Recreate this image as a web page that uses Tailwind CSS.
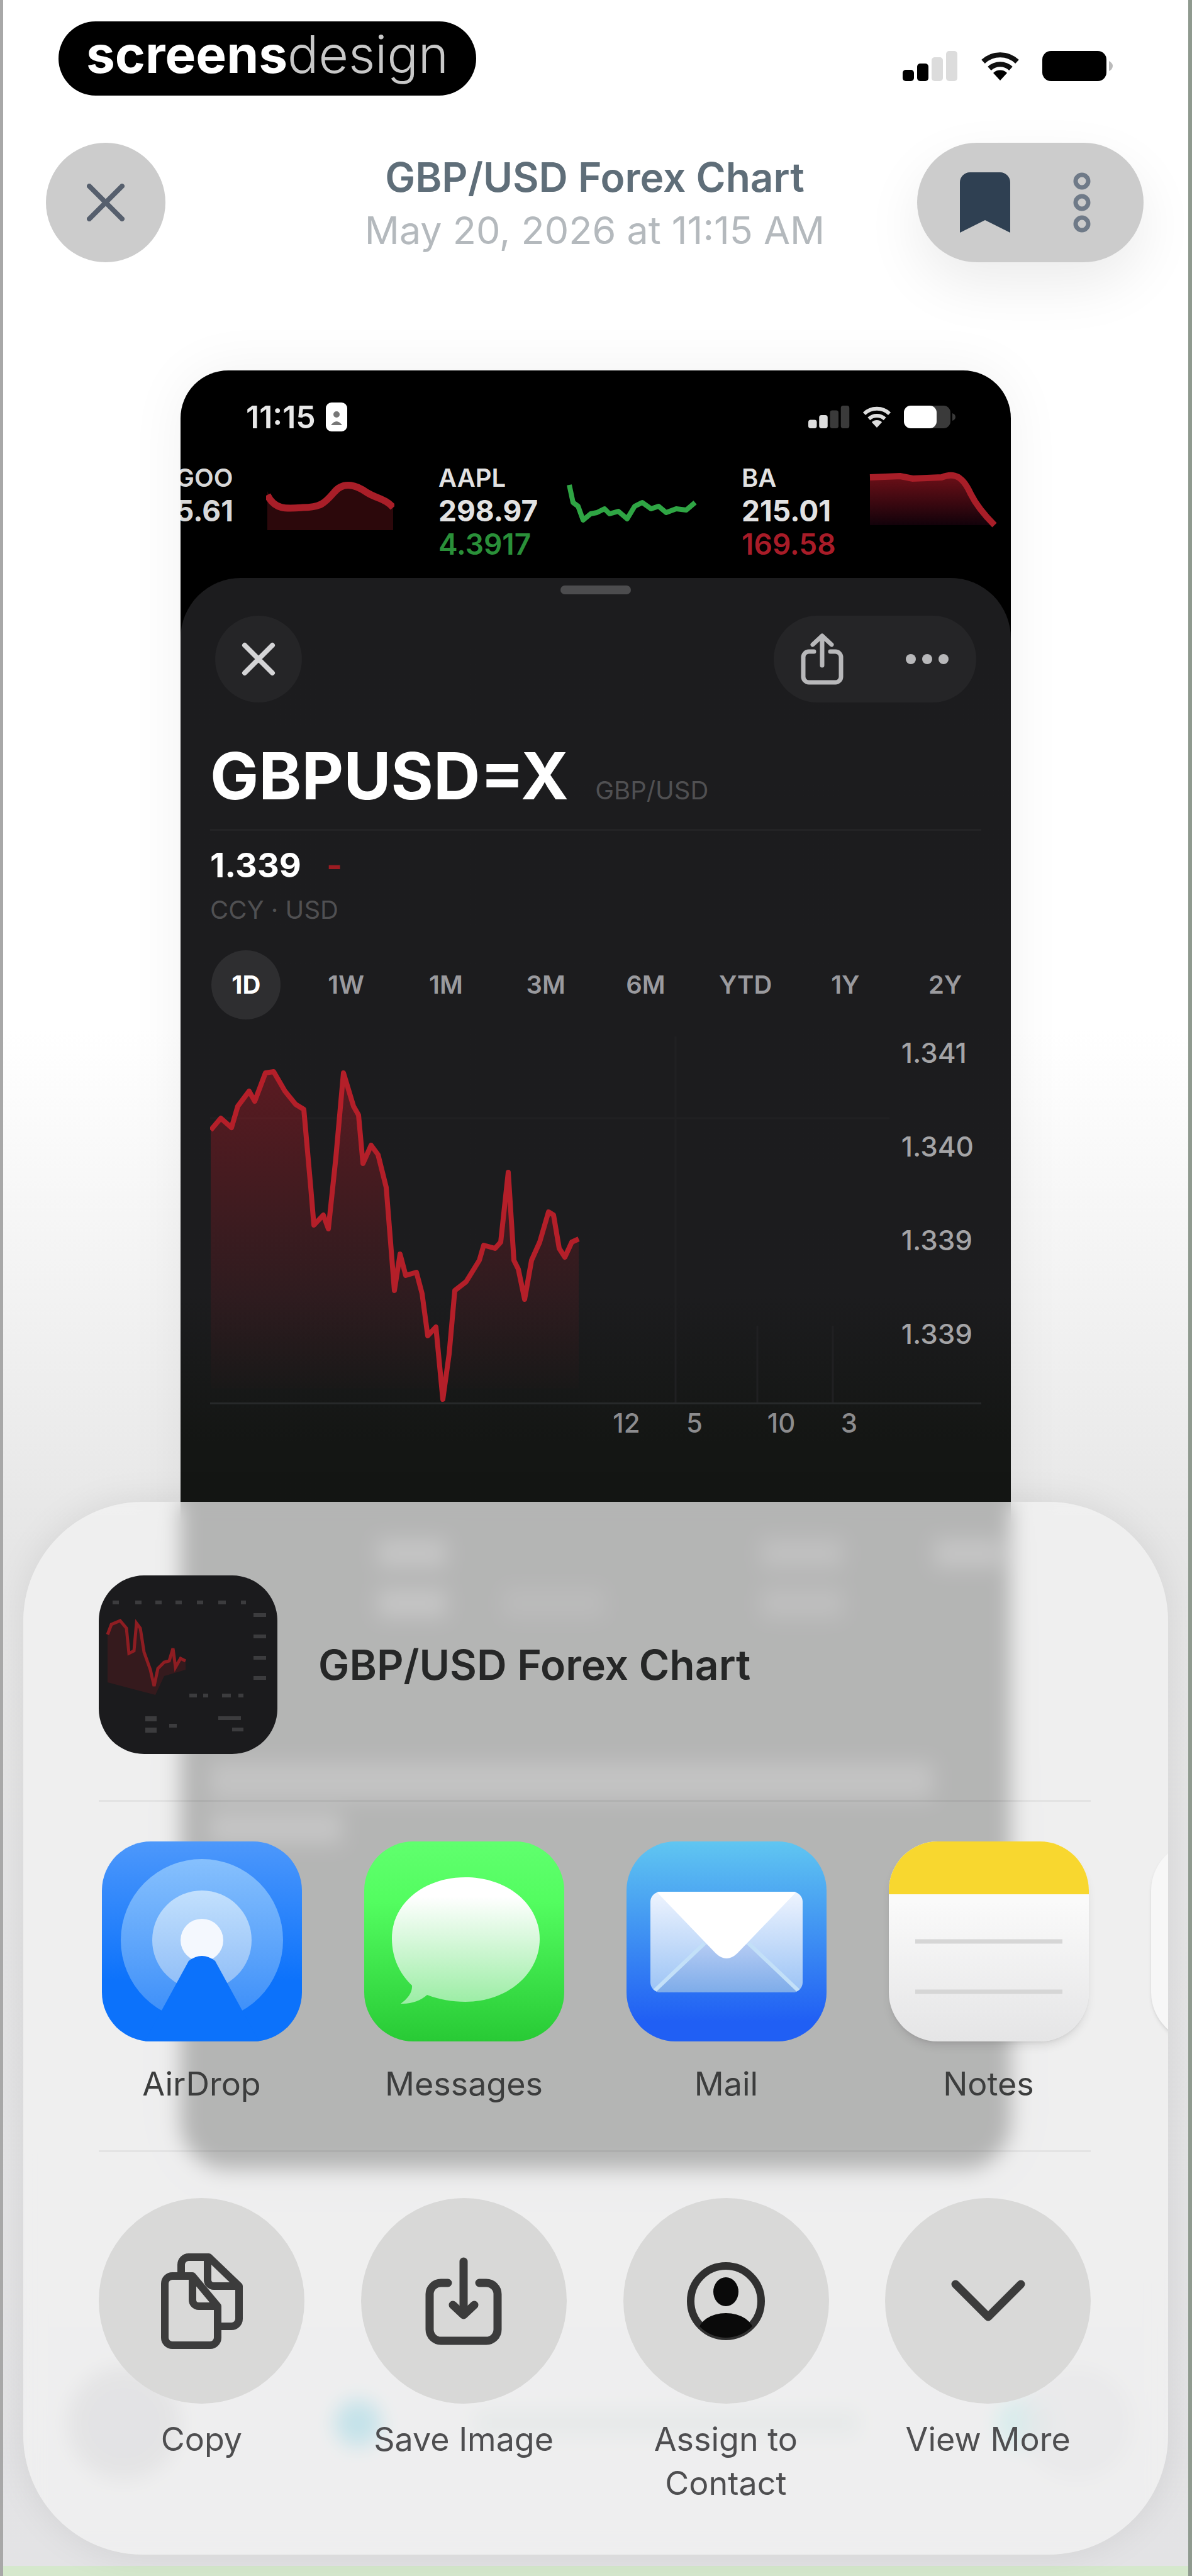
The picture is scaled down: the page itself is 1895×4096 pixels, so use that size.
<!DOCTYPE html>
<html lang="en">

<head>
    <meta charset="UTF-8" />
    <meta name="viewport" content="width=device-width, initial-scale=1.0" />
    <title>GBP/USD Forex Chart</title>
    <script src="https://cdn.jsdelivr.net/npm/@tailwindcss/browser@4"></script>
</head>

<body class="font-[Inter,'Liberation_Sans',sans-serif]">
    <div class="relative min-h-screen overflow-hidden border-l-5 border-r-6 border-l-[#a8a8a8] border-r-[#8f9a8f] bg-linear-to-b from-white from-40% via-[#e6e6e6] via-60% to-[#e3e3e5]">

        <!-- status bar -->
        <div class="flex items-center justify-between pt-[34px] pl-[88px] pr-[120px]">
            <div class="flex h-[118px] w-[664px] items-center justify-center rounded-full bg-black pb-3 text-[82px] leading-none text-white">
                <span class="font-bold">screens</span><span class="font-light text-[#c8c8c8]">design</span>
            </div>
            <div class="flex items-center gap-9 pt-6">
                <svg class="h-[48px] w-[88px]" viewBox="0 0 88 48">
                    <rect x="0" y="30" width="18" height="18" rx="5" />
                    <rect x="23" y="20" width="18" height="28" rx="5" />
                    <rect x="46" y="10" width="18" height="38" rx="5" fill="#dcdcdc" />
                    <rect x="69" y="0" width="18" height="48" rx="5" fill="#dcdcdc" />
                </svg>
                <svg class="h-[48px] w-[62px]" viewBox="0 0 62 46">
                    <path d="M31 46 20 34a16 16 0 0 1 22 0z" />
                    <path d="M14 27a25 25 0 0 1 34 0M4 16a39 39 0 0 1 54 0" fill="none" stroke="#111" stroke-width="8" />
                </svg>
                <svg class="h-[48px] w-[112px]" viewBox="0 0 112 48">
                    <rect x="0" y="0" width="102" height="48" rx="14" />
                    <path d="M106 16q6 3 6 8t-6 8z" fill="#bbb" />
                </svg>
            </div>
        </div>

        <!-- header -->
        <header class="mt-[75px] flex items-center justify-between pl-[68px] pr-[71px]">
            <div class="w-[360px]">
                <button aria-label="Close" class="flex size-[190px] items-center justify-center rounded-full bg-[#cccccc]">
                    <svg class="size-[60px]" viewBox="0 0 60 60" fill="none" stroke="#565f6d" stroke-width="8" stroke-linecap="round">
                        <path d="M4 4 56 56M56 4 4 56" />
                    </svg>
                </button>
            </div>
            <div class="pt-1 text-center whitespace-nowrap">
                <h1 class="text-[64px] leading-[84px] font-semibold text-[#5f6e79]">GBP/USD Forex Chart</h1>
                <p class="text-[61px] leading-[84px] text-[#b4b9bd]">May 20, 2026 at 11:15 AM</p>
            </div>
            <div class="flex h-[190px] w-[360px] items-center justify-center gap-[84px] rounded-full bg-[#cccccc] shadow-[0_36px_90px_rgba(0,0,0,0.08)]">
                <button aria-label="Bookmark">
                    <svg class="h-[96px] w-[80px]" viewBox="0 0 80 96">
                        <path d="M16 0h48a16 16 0 0 1 16 16v80L40 76 0 96V16A16 16 0 0 1 16 0z" fill="#2f4052" />
                    </svg>
                </button>
                <button aria-label="More">
                    <svg class="h-[96px] w-[60px]" viewBox="0 0 60 96" fill="none" stroke="#6f7a88" stroke-width="7">
                        <circle cx="30" cy="14" r="10" />
                        <circle cx="30" cy="48" r="10" />
                        <circle cx="30" cy="82" r="10" />
                    </svg>
                </button>
            </div>
        </header>

        <!-- chart screenshot -->
        <main class="mx-auto mt-[172px] h-[2860px] w-[1320px] overflow-hidden rounded-[76px] bg-black text-white shadow-[0_0_90px_rgba(0,0,0,0.06)]">
            <div class="flex items-center justify-between pt-[44px] pr-[88px] pl-[104px]">
                <div class="flex items-center gap-4">
                    <span class="text-[50px] leading-[60px] font-semibold text-[#e8e8e8]">11:15</span>
                    <svg class="h-[46px] w-[34px]" viewBox="0 0 34 46">
                        <rect width="34" height="46" rx="9" fill="#fff" />
                        <circle cx="17" cy="19" r="5" fill="#777" />
                        <path d="M8 36q9-12 18 0z" fill="#777" />
                    </svg>
                </div>
                <div class="flex items-center gap-5">
                    <svg class="h-[36px] w-[66px]" viewBox="0 0 88 48" fill="#ddd">
                        <rect x="0" y="30" width="18" height="18" rx="5" />
                        <rect x="23" y="20" width="18" height="28" rx="5" />
                        <rect x="46" y="10" width="18" height="38" rx="5" fill="#3a3a3a" />
                        <rect x="69" y="0" width="18" height="48" rx="5" fill="#3a3a3a" />
                    </svg>
                    <svg class="h-[36px] w-[46px]" viewBox="0 0 62 46" fill="#ddd">
                        <path d="M31 46 20 34a16 16 0 0 1 22 0z" />
                        <path d="M14 27a25 25 0 0 1 34 0M4 16a39 39 0 0 1 54 0" fill="none" stroke="#ddd" stroke-width="8" />
                    </svg>
                    <svg class="h-[36px] w-[82px]" viewBox="0 0 82 36">
                        <rect width="74" height="36" rx="11" fill="#3a3a3a" />
                        <rect width="52" height="36" rx="11" fill="#fff" />
                        <path d="M77 12q5 2 5 6t-5 6z" fill="#3a3a3a" />
                    </svg>
                </div>
            </div>

            <!-- tickers -->
            <div class="mt-[40px] flex h-[186px] text-[46px] leading-[53px] font-bold">
                <div class="flex w-[410px] gap-[36px]">
                    <div class="-ml-2 w-[108px] text-[#d8d8d8]">
                        <div class="text-[40px] font-semibold">GOO</div>
                        <div>5.61</div>
                    </div>
                    <svg class="mt-[18px] h-[110px] w-[204px]" viewBox="0 0 204 110">
                        <path d="M2 30 C14 58 32 56 58 54 C88 54 94 48 108 32 C124 12 146 22 160 32 C176 42 190 42 202 56 V92 H2Z" fill="#2c080b" />
                        <path d="M2 36 C14 60 32 58 58 56 C88 56 94 48 108 32 C124 12 146 22 160 32 C176 42 190 42 202 56" fill="none" stroke="#a81e28" stroke-width="11" />
                    </svg>
                </div>
                <div class="flex w-[482px] gap-[36px]">
                    <div class="w-[164px] text-[#e2e2e2]">
                        <div class="text-[40px] font-semibold">AAPL</div>
                        <div>298.97</div>
                        <div class="font-semibold text-[#2a9039]">4.3917</div>
                    </div>
                    <svg class="mt-[18px] h-[110px] w-[212px]" viewBox="0 0 212 110" fill="none" stroke="#2fa544" stroke-width="8" stroke-linejoin="round">
                        <path d="M8 20 L14 48 L22 54 L30 76 L42 66 L52 64 L64 58 L72 66 L86 62 L100 74 L112 54 L124 48 L138 58 L150 54 L162 64 L178 58 L194 60 L208 48" />
                    </svg>
                </div>
                <div class="flex gap-[38px]">
                    <div class="w-[164px] text-[#e2e2e2]">
                        <div class="text-[40px] font-semibold">BA</div>
                        <div>215.01</div>
                        <div class="font-semibold text-[#a81c28]">169.58</div>
                    </div>
                    <svg class="mt-[6px] h-[110px] w-[204px]" viewBox="0 0 204 110">
                        <defs>
                            <linearGradient id="fall" x1="0" y1="0" x2="0" y2="1">
                                <stop offset="0" stop-color="#6a0f17" />
                                <stop offset="1" stop-color="#12020a" />
                            </linearGradient>
                        </defs>
                        <path d="M2 22 L118 22 C140 14 150 24 160 44 C172 66 184 80 200 96 H2Z" fill="url(#fall)" />
                        <path d="M2 20 L50 18 L70 22 L116 20 C140 10 152 24 162 46 C172 66 184 80 200 96" fill="none" stroke="#a81e28" stroke-width="10" />
                    </svg>
                </div>
            </div>

            <!-- detail sheet -->
            <section class="h-full rounded-t-[96px] bg-linear-to-b from-[#1c1c1e] from-40% to-[#141614] to-48% px-[47px] pt-[12px]">
                <div class="mx-auto h-[14px] w-[112px] rounded-full bg-[#4c4c4e]"></div>
                <div class="mt-[34px] flex justify-between px-[8px]">
                    <button aria-label="Close" class="flex size-[138px] items-center justify-center rounded-full bg-[#252527]">
                        <svg class="size-[54px]" viewBox="0 0 54 54" fill="none" stroke="#d4d4d6" stroke-width="8" stroke-linecap="round">
                            <path d="M5 5 49 49M49 5 5 49" />
                        </svg>
                    </button>
                    <div class="flex h-[138px] w-[322px] items-center justify-between rounded-full bg-[#252527] px-[42px]">
                        <button aria-label="Share">
                            <svg class="h-[84px] w-[70px]" viewBox="0 0 70 84" fill="none" stroke="#b8b8ba" stroke-width="7" stroke-linecap="round" stroke-linejoin="round">
                                <path d="M22 30h-8a9 9 0 0 0-9 9v31a9 9 0 0 0 9 9h42a9 9 0 0 0 9-9V39a9 9 0 0 0-9-9h-8M35 52V5M20 19 35 5l15 14" />
                            </svg>
                        </button>
                        <button aria-label="More">
                            <svg class="h-[20px] w-[72px]" viewBox="0 0 72 20" fill="#b8b8ba">
                                <circle cx="10" cy="10" r="8" />
                                <circle cx="36" cy="10" r="8" />
                                <circle cx="62" cy="10" r="8" />
                            </svg>
                        </button>
                    </div>
                </div>

                <div class="mt-[52px] flex items-baseline gap-[42px] border-b-3 border-[#232325] pb-[19px]">
                    <h2 class="text-[103px] leading-[130px] font-bold">GBPUSD=X</h2>
                    <span class="text-[40px] text-[#505052]">GBP/USD</span>
                </div>
                <div class="mt-[22px] flex items-center gap-[40px] text-[54px] leading-[66px] font-bold">
                    <span>1.339</span>
                    <span class="text-[#9c1c22]">-</span>
                </div>
                <p class="mt-[12px] text-[40px] leading-[52px] text-[#505052]">CCY · USD</p>

                <div class="-mx-[22px] mt-[38px] grid grid-cols-8 text-[40px] font-semibold text-[#9a9a9e]">
                    <button class="mx-auto size-[110px] rounded-full bg-[#2e2e30] font-bold text-white">1D</button>
                    <button>1W</button>
                    <button>1M</button>
                    <button>3M</button>
                    <button>6M</button>
                    <button>YTD</button>
                    <button>1Y</button>
                    <button>2Y</button>
                </div>

                <!-- chart -->
                <div class="mt-[27px] flex justify-between border-b-3 border-[#27292a]">
                    <svg class="h-[582px] w-[1080px]" viewBox="0 0 1080 582">
                        <defs>
                            <linearGradient id="area" x1="0" y1="0" x2="0" y2="1">
                                <stop offset="0" stop-color="#b01825" stop-opacity=".42" />
                                <stop offset=".5" stop-color="#b01825" stop-opacity=".2" />
                                <stop offset="1" stop-color="#b01825" stop-opacity="0" />
                            </linearGradient>
                        </defs>
                        <path d="M0 130H1080M740 0V582M870 460V582M990 460V582" stroke="#202022" stroke-width="3" />
                        <path fill="url(#area)" d="M1 149 17 130 34 145 44 111 62 87 71 103 88 58 101 56 119 87 136 108 149 116 160 240 165 300 180 284 188 306 200 192 212 58 228 111 236 125 243 202 256 173 267 188 280 240 293 404 302 346 311 380 328 375 337 409 346 476 359 462 370 577 380 505 389 404 407 390 428 356 435 332 453 337 462 327 474 216 483 356 490 370 500 418 511 356 524 327 538 279 546 284 555 337 564 351 575 327 586 322V560H1Z" />
                        <path fill="none" stroke="#b41f29" stroke-width="8" stroke-linejoin="round" d="M1 149 17 130 34 145 44 111 62 87 71 103 88 58 101 56 119 87 136 108 149 116 160 240 165 300 180 284 188 306 200 192 212 58 228 111 236 125 243 202 256 173 267 188 280 240 293 404 302 346 311 380 328 375 337 409 346 476 359 462 370 577 380 505 389 404 407 390 428 356 435 332 453 337 462 327 474 216 483 356 490 370 500 418 511 356 524 327 538 279 546 284 555 337 564 351 575 327 586 322" />
                    </svg>
                    <div class="flex flex-col gap-[101px] pt-[2px] pr-[12px] text-[44px] leading-[48px] font-medium text-[#a4a4a6]">
                        <span>1.341</span>
                        <span>1.340</span>
                        <span>1.339</span>
                        <span>1.339</span>
                    </div>
                </div>
                <div class="mt-[6px] flex pl-[600px] text-center text-[42px] leading-[48px] font-medium text-[#8c8c8e]">
                    <span class="w-[124px]">12</span>
                    <span class="w-[92px]">5</span>
                    <span class="w-[184px]">10</span>
                    <span class="w-[32px]">3</span>
                </div>

                <!-- stats behind the share sheet -->
                <div aria-hidden="true" class="mt-[160px] space-y-[33px] pl-[266px]">
                    <div class="flex *:h-[46px] *:shrink-0">
                        <div class="mr-[500px] w-[110px] bg-[#505050]"></div>
                        <div class="mr-[145px] w-[130px] bg-[#404040]"></div>
                        <div class="w-[110px] bg-[#505050]"></div>
                    </div>
                    <div class="flex *:h-[46px] *:shrink-0">
                        <div class="mr-[90px] w-[110px] bg-[#505050]"></div>
                        <div class="mr-[250px] w-[160px] bg-[#2e2e2e]"></div>
                        <div class="w-[130px] bg-[#3a3a3a]"></div>
                    </div>
                </div>
                <div aria-hidden="true" class="mt-[230px] space-y-[20px]">
                    <div class="h-[60px] w-[1150px] bg-[#4a4a4a]"></div>
                    <div class="h-[50px] w-[210px] bg-[#505050]"></div>
                </div>
            </section>
        </main>

        <!-- toolbar behind the share sheet -->
        <div aria-hidden="true" class="mt-[314px] flex items-center pr-[88px] pl-[102px]">
            <div class="size-[180px] rounded-full bg-[#bcbcc0]"></div>
            <div class="mr-auto ml-[245px] flex w-[835px] items-center justify-between">
                <div class="size-[74px] rounded-full bg-[#4cb8d2]"></div>
                <div class="h-[44px] w-[614px] bg-[#c8d2d2]"></div>
            </div>
            <div class="-mr-[44px] size-[80px] rounded-full bg-[#8edcdc]"></div>
            <div class="size-[180px] rounded-full bg-[#cacad0]/70"></div>
        </div>
        <div class="absolute inset-x-0 bottom-0 h-[16px] bg-[#d5e8cd]"></div>

        <!-- share sheet -->
        <section class="absolute inset-x-[32px] bottom-[34px] overflow-hidden rounded-[190px] bg-[#f2f2f2]/72 pt-[117px] pr-[123px] pb-[78px] pl-[120px] shadow-[0_0_60px_rgba(0,0,0,0.08)] backdrop-blur-lg">
            <div class="flex items-center gap-[65px] border-b-3 border-black/5 pb-[73px]">
                <svg class="size-[284px] rounded-[72px]" viewBox="0 0 284 284">
                    <rect width="284" height="284" fill="#1b1b1d" />
                    <g fill="#3c3c3e">
                        <path d="M22 40h10v6H22zM58 40h10v6H58zM90 40h10v6H90zM122 40h10v6H122zM156 40h10v6H156zM190 40h12v6H190zM226 40h8v6H226z" />
                        <path d="M246 60h20v6H246zM246 94h20v6H246zM246 128h20v6H246zM246 160h20v6H246zM144 188h12v6H144zM166 188h8v6H166zM196 188h14v6H196zM222 188h8v6H222z" />
                        <path d="M74 224h18v8H74zM74 242h18v8H74zM112 236h12v6H112zM190 224h36v6H190zM212 242h18v6H212z" />
                    </g>
                    <path d="M14 94 20 78 34 72 44 84 48 124 56 120 60 76 66 84 72 122 82 150 88 176 94 148 104 138 112 136 118 116 122 146 130 132 138 136V150L104 160 90 190 14 170Z" fill="#741a1f" opacity=".3" />
                    <path d="M14 94 20 78 34 72 44 84 48 124 56 120 60 76 66 84 72 122 82 150 88 176 94 148 104 138 112 136 118 116 122 146 130 132 138 136" fill="none" stroke="#8e1d22" stroke-width="5" />
                </svg>
                <h2 class="text-[66px] leading-[84px] font-semibold text-[#262727]">GBP/USD Forex Chart</h2>
            </div>

            <!-- apps -->
            <div class="-mr-[123px] overflow-hidden">
                <div class="flex gap-[90px] pt-[63px] text-[52px] leading-[70px] text-[#3c3d3d]">
                    <button class="w-[327px] shrink-0">
                        <svg class="mx-auto size-[318px] rounded-[78px]" viewBox="0 0 318 318">
                            <defs>
                                <linearGradient id="drop" x1="0" y1="0" x2="0" y2="1">
                                    <stop offset="0" stop-color="#4d98fb" />
                                    <stop offset=".7" stop-color="#0c72fb" />
                                </linearGradient>
                                <linearGradient id="ringA" x1="0" y1="0" x2="0" y2="1">
                                    <stop offset="0" stop-color="#86c0fd" />
                                    <stop offset="1" stop-color="#3a8df9" />
                                </linearGradient>
                                <linearGradient id="ringB" x1="0" y1="0" x2="0" y2="1">
                                    <stop offset="0" stop-color="#c2e0fd" />
                                    <stop offset="1" stop-color="#8fbdf7" />
                                </linearGradient>
                            </defs>
                            <rect width="318" height="318" fill="url(#drop)" />
                            <circle cx="159" cy="157" r="129" fill="url(#ringA)" />
                            <circle cx="159" cy="157" r="79" fill="url(#ringB)" />
                            <circle cx="159" cy="157" r="34" fill="#f4f8fe" />
                            <path d="M138 190Q159 174 180 190L250 318H68Z" fill="#0c72fb" />
                        </svg>
                        <span class="mt-[33px] block">AirDrop</span>
                    </button>
                    <button class="w-[327px] shrink-0">
                        <svg class="mx-auto size-[318px] rounded-[78px]" viewBox="0 0 318 318">
                            <defs>
                                <linearGradient id="msg" x1="0" y1="0" x2="0" y2="1">
                                    <stop offset="0" stop-color="#60ff6e" />
                                    <stop offset=".3" stop-color="#53fd60" />
                                    <stop offset="1" stop-color="#28ca35" />
                                </linearGradient>
                                <linearGradient id="bubble" x1="0" y1="0" x2="0" y2="1">
                                    <stop offset=".15" stop-color="#ffffff" />
                                    <stop offset="1" stop-color="#9beda4" />
                                </linearGradient>
                            </defs>
                            <rect width="318" height="318" fill="url(#msg)" />
                            <path d="M161 57C95 57 44 99 44 154c0 33 14 58 32 75 1 12-8 22-18 29 16 1 32-5 42-14 18 7 38 11 61 11 66 0 118-44 118-100S227 57 161 57z" fill="url(#bubble)" />
                        </svg>
                        <span class="mt-[33px] block">Messages</span>
                    </button>
                    <button class="w-[327px] shrink-0">
                        <svg class="mx-auto size-[318px] rounded-[78px]" viewBox="0 0 318 318">
                            <defs>
                                <linearGradient id="mail" x1="0" y1="0" x2="0" y2="1">
                                    <stop offset="0" stop-color="#60c6f1" />
                                    <stop offset=".9" stop-color="#205ff4" />
                                </linearGradient>
                                <linearGradient id="flapSide" x1="0" y1="0" x2="0" y2="1">
                                    <stop offset="0" stop-color="#eef4fe" />
                                    <stop offset="1" stop-color="#9bc3f5" />
                                </linearGradient>
                                <linearGradient id="flapLow" x1="0" y1="0" x2="0" y2="1">
                                    <stop offset="0" stop-color="#b4cbf3" />
                                    <stop offset="1" stop-color="#7eace9" />
                                </linearGradient>
                                <clipPath id="envelope">
                                    <rect x="38" y="80" width="242" height="160" rx="16" />
                                </clipPath>
                            </defs>
                            <rect width="318" height="318" fill="url(#mail)" />
                            <g clip-path="url(#envelope)">
                                <rect x="38" y="80" width="242" height="160" fill="url(#flapSide)" />
                                <path d="M44 240 118 164H200L274 240Z" fill="url(#flapLow)" />
                                <path d="M44 238 124 162M274 238 194 162" stroke="#c3e0f8" stroke-width="6" />
                                <path d="M44 76H274L176 178Q159 194 142 178Z" fill="#fff" />
                            </g>
                        </svg>
                        <span class="mt-[33px] block">Mail</span>
                    </button>
                    <button class="w-[327px] shrink-0">
                        <svg class="mx-auto size-[318px] rounded-[78px] shadow-lg" viewBox="0 0 318 318">
                            <defs>
                                <linearGradient id="note" x1="0" y1="0" x2="0" y2="1">
                                    <stop offset=".3" stop-color="#fafafa" />
                                    <stop offset="1" stop-color="#e5e5e6" />
                                </linearGradient>
                            </defs>
                            <rect width="318" height="318" fill="url(#note)" />
                            <rect width="318" height="84" fill="#f8d72f" />
                            <path d="M42 159H276M42 239H276" stroke="#d6d6d6" stroke-width="7" />
                        </svg>
                        <span class="mt-[33px] block">Notes</span>
                    </button>
                    <div class="w-[327px] shrink-0">
                        <div class="mx-auto size-[318px] rounded-[78px] bg-[#f7f7f7] shadow-md"></div>
                    </div>
                </div>
            </div>

            <!-- actions -->
            <div class="mt-[70px] grid grid-cols-4 items-start gap-[90px] border-t-3 border-black/5 pt-[73px] text-[52px] leading-[70px] text-[#4e4e50]">
                <button>
                    <span class="mx-auto flex size-[327px] items-center justify-center rounded-full bg-[#d9d9d8]">
                        <svg class="h-[152px] w-[130px]" viewBox="0 0 130 152" fill="none" stroke="#3c3c3c" stroke-width="12" stroke-linejoin="round">
                            <path d="M32 36H18A12 12 0 0 0 6 48V134A12 12 0 0 0 18 146H78A12 12 0 0 0 90 134V84L50 36Z" />
                            <path d="M50 38V74A10 10 0 0 0 60 84H88" />
                            <path d="M32 36V18A12 12 0 0 1 44 6H76L124 52V104A12 12 0 0 1 112 116H92" />
                            <path d="M74 8V42A10 10 0 0 0 84 52H120" />
                        </svg>
                    </span>
                    <span class="mt-[22px] block">Copy</span>
                </button>
                <button>
                    <span class="mx-auto flex size-[327px] items-center justify-center rounded-full bg-[#d8d8d7]">
                        <svg class="h-[140px] w-[122px]" viewBox="0 0 122 140" fill="none" stroke="#3c3c3c" stroke-width="13" stroke-linecap="round">
                            <path d="M36 41H25A18 18 0 0 0 7 59V115A18 18 0 0 0 25 133H97A18 18 0 0 0 115 115V59A18 18 0 0 0 97 41H86" />
                            <path d="M61 7V88" />
                            <path d="M44 76 61 92 78 76" stroke-linejoin="round" />
                        </svg>
                    </span>
                    <span class="mt-[22px] block">Save Image</span>
                </button>
                <button>
                    <span class="mx-auto flex size-[327px] items-center justify-center rounded-full bg-[#d9d9d8]">
                        <svg class="size-[126px]" viewBox="0 0 126 126">
                            <defs>
                                <clipPath id="face">
                                    <circle cx="63" cy="63" r="58" />
                                </clipPath>
                            </defs>
                            <circle cx="63" cy="63" r="56" fill="none" stroke="#303030" stroke-width="12" />
                            <ellipse cx="63" cy="48" rx="20" ry="23" fill="#0a0a0a" />
                            <ellipse cx="63" cy="112" rx="44" ry="30" fill="#0a0a0a" clip-path="url(#face)" />
                        </svg>
                    </span>
                    <span class="mt-[22px] block">Assign to Contact</span>
                </button>
                <button>
                    <span class="mx-auto flex size-[327px] items-center justify-center rounded-full bg-[#d9d9d8]">
                        <svg class="h-[70px] w-[120px]" viewBox="0 0 120 70" fill="none" stroke="#3c3c3c" stroke-width="13" stroke-linecap="round" stroke-linejoin="round">
                            <path d="M8 8 60 60 112 8" />
                        </svg>
                    </span>
                    <span class="mt-[22px] block">View More</span>
                </button>
            </div>
        </section>
    </div>
</body>

</html>
